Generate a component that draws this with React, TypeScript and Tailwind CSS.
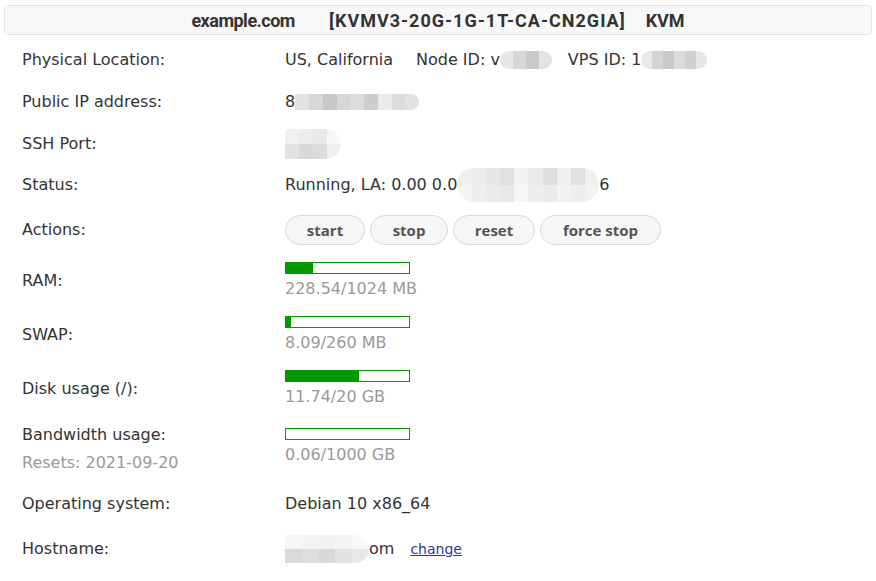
import type { ReactNode } from 'react';

// pixelated redaction patch
function Blur({ w, h, cells, rows = 1, className = '' }: { w: number; h: number; cells: string[]; rows?: number; className?: string }) {
  const cols = Math.ceil(cells.length / rows);
  return (
    <span
      className={`inline-grid overflow-hidden rounded-full align-middle ${className}`}
      style={{ width: w, height: h, gridTemplateColumns: `repeat(${cols}, 1fr)` }}
    >
      {cells.map((c, i) => (
        <span key={i} style={{ background: c }} />
      ))}
    </span>
  );
}

function Bar({ pct, label }: { pct: number; label: string }) {
  return (
    <div className="flex flex-col">
      <div className="h-[12px] w-[125px] border border-[#009900] bg-white">
        <div className="h-full bg-[#009900]" style={{ width: `${pct}%` }} />
      </div>
      <span className="mt-[3px] text-[#999]">{label}</span>
    </div>
  );
}

function Row({ label, h, children }: { label: ReactNode; h: number; children: ReactNode }) {
  return (
    <div className="flex items-center" style={{ height: h }}>
      <div className="w-[285px] shrink-0 pl-[22px]">{label}</div>
      <div className="flex flex-1 items-center">{children}</div>
    </div>
  );
}

const btn =
  'h-[30px] rounded-full border border-[#d9d9d9] bg-[#f6f6f6] font-["Open_Sans",sans-serif] text-[15px] font-bold text-[#555]';

export default function App() {
  return (
    <div className="min-h-screen bg-white font-['DejaVu_Sans',sans-serif] text-[16px] text-[#333]">
      <div className="px-[4px] pt-[5px]">
        <div className="flex h-[30px] items-center justify-center rounded-[4px] border border-[#e3e3e3] bg-[#f8f8f8] font-['Roboto',sans-serif] text-[18px] font-bold text-[#333]">
          <span className="tracking-[-0.5px]">example.com</span>
          <span className="ml-[34px] tracking-[1px]">[KVMV3-20G-1G-1T-CA-CN2GIA]</span>
          <span className="ml-[20px]">KVM</span>
        </div>
      </div>

      <div className="pt-[4px]">
        <Row label="Physical Location:" h={42}>
          <span>US, California</span>
          <span className="ml-[23px]">Node ID: v</span>
          <Blur w={52} h={18} cells={['#e6e6e6', '#d7d7d7', '#cbc8c5', '#e2e3e5']} />
          <span className="ml-[16px]">VPS ID: 1</span>
          <Blur w={66} h={18} cells={['#e8e8e8', '#d4d4d4', '#cbc9c6', '#dcdcdc', '#cfcfcf', '#e6e6e6']} />
        </Row>
        <Row label="Public IP address:" h={42}>
          <span>8</span>
          <Blur w={124} h={16} cells={['#e2e2e2', '#d8d8d8', '#c8c8c8', '#d7d7d7', '#dcdcdc', '#cdcdcd', '#ebebeb', '#dadcdd', '#e2e2e2']} className="rounded-l-none" />
        </Row>
        <Row label="SSH Port:" h={41}>
          <Blur w={56} h={30} rows={2} cells={['#f1f1f1', '#ececec', '#e9e9e9', '#f7f7f7', '#e2e2e2', '#d8d8d8', '#dcdcdc', '#f0f0f0']} className="rounded-l-none" />
        </Row>
        <Row label="Status:" h={42}>
          <span>Running, LA: 0.00 0.0</span>
          <Blur w={142} h={34} rows={2} cells={['#f0f0f0', '#ececec', '#e6e6e6', '#e0e0e0', '#f2f2f2', '#eaeaea', '#dedede', '#efefef', '#e0e0e0', '#f0f0f0', '#f4f4f4', '#eeeeee', '#ebebeb', '#e8e8e8', '#f6f6f6', '#eeeeee', '#ebebeb', '#f2f2f2', '#eeeeee', '#f3f3f3']} />
          <span>6</span>
        </Row>
        <Row label="Actions:" h={48}>
          <div className="flex gap-[5px]">
            <button className={`${btn} w-[80px]`}>start</button>
            <button className={`${btn} w-[78px]`}>stop</button>
            <button className={`${btn} w-[82px]`}>reset</button>
            <button className={`${btn} w-[121px]`}>force stop</button>
          </div>
        </Row>
        <Row label="RAM:" h={54}>
          <Bar pct={22} label="228.54/1024 MB" />
        </Row>
        <Row label="SWAP:" h={54}>
          <Bar pct={4} label="8.09/260 MB" />
        </Row>
        <Row label="Disk usage (/):" h={54}>
          <Bar pct={59} label="11.74/20 GB" />
        </Row>
        <Row
          label={
            <div className="flex flex-col gap-[4px]">
              <span>Bandwidth usage:</span>
              <span className="text-[#999]">Resets: 2021-09-20</span>
            </div>
          }
          h={66}
        >
          <div className="-mt-[3px]">
            <Bar pct={0} label="0.06/1000 GB" />
          </div>
        </Row>
        <Row label="Operating system:" h={44}>
          Debian 10 x86_64
        </Row>
        <Row label="Hostname:" h={46}>
          <Blur w={84} h={28} rows={2} cells={['#f6f6f6', '#f4f4f4', '#f1f1f1', '#f4f4f4', '#f8f8f8', '#d9d9d9', '#dedede', '#d8d8d8', '#e2e2e2', '#e8e8e8']} className="rounded-l-none" />
          <span>om</span>
          <a href="#" className="ml-[16px] text-[14px] text-[#333399] underline">change</a>
        </Row>
      </div>
    </div>
  );
}
